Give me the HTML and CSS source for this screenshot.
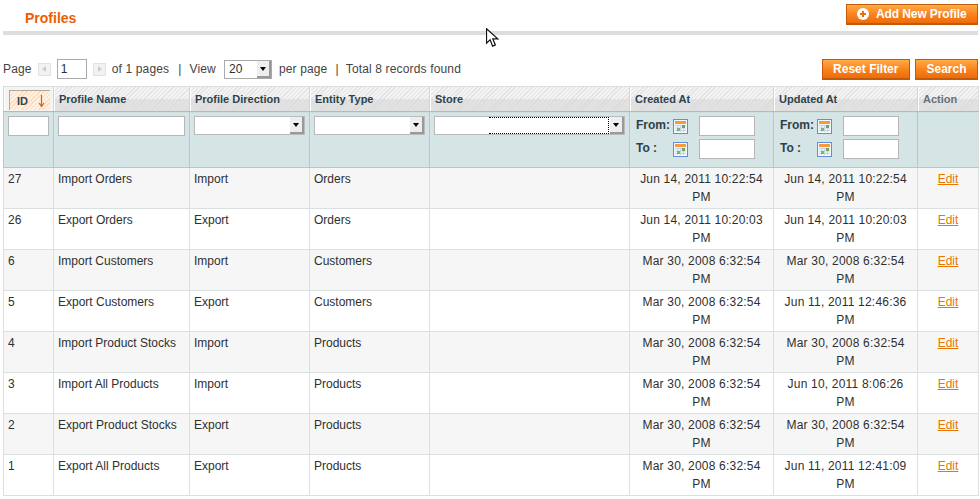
FILE: index.html
```html
<!DOCTYPE html>
<html lang="en">
<head>
  <meta charset="UTF-8">
  <title>Profiles</title>
  <link rel="stylesheet" href="styles.css">
</head>
<body>

  <svg class="defs" width="0" height="0">
    <symbol id="cal" viewBox="0 0 15 15">
      <rect x="0.5" y="0.5" width="14" height="14" fill="#f4f7fc" stroke="#5f8fd6"/>
      <rect x="2" y="2" width="11" height="3" fill="#f79a3e"/>
      <path d="M2 6.5h11M2 9h11M2 11.5h11M4.500 6v7M7.500 6v7M10.500 6v7" stroke="#c3d3e8" stroke-width="1"/>
      <rect x="9" y="6" width="3" height="3" fill="#68a95b"/>
      <rect x="4" y="9" width="3" height="3" fill="#7fb56f"/>
    </symbol>
  </svg>

  <div class="head">
    <h3>Profiles</h3>
    <button class="btn btn-add" type="button">
      <svg class="plus" width="12" height="12" viewBox="0 0 12 12">
        <circle cx="6" cy="6" r="6" fill="#fff"/>
        <path d="M6 3v6M3 6h6" stroke="#e8700c" stroke-width="2"/>
      </svg>
      Add New Profile
    </button>
  </div>

  <div class="toolbar">
    <div class="pager">
      Page
      <span class="arrow arrow-prev"></span>
      <input class="page-input" type="text" value="1">
      <span class="arrow arrow-next"></span>
      of 1 pages
      <span class="sep">|</span>
      View
      <span class="select select-view"><span class="select-val">20</span><span class="select-btn"></span></span>
      per page
      <span class="sep sep-last">|</span>
      Total 8 records found
    </div>
    <div class="actions">
      <button class="btn" type="button">Reset Filter</button>
      <button class="btn" type="button">Search</button>
    </div>
  </div>

  <table class="grid">
    <colgroup>
      <col class="c-id"><col class="c-name"><col class="c-dir"><col class="c-type">
      <col class="c-store"><col class="c-date"><col class="c-date"><col class="c-action">
    </colgroup>
    <thead>
      <tr class="headings">
        <th class="sorted">
          <span class="sort">ID
            <svg class="sort-arrow" width="7" height="12" viewBox="0 0 7 12">
              <path d="M3.500 0v11M1 8l2.500 3.500L6 8" fill="none" stroke="#eb5e00" stroke-width="1.200"/>
            </svg>
          </span>
        </th>
        <th>Profile Name</th>
        <th>Profile Direction</th>
        <th>Entity Type</th>
        <th>Store</th>
        <th>Created At</th>
        <th>Updated At</th>
        <th class="no-link">Action</th>
      </tr>
      <tr class="filter">
        <th><input class="field" type="text"></th>
        <th><input class="field" type="text"></th>
        <th><span class="select"><span class="select-btn"></span></span></th>
        <th><span class="select"><span class="select-btn"></span></span></th>
        <th><span class="select select-store"><span class="focus"></span><span class="select-btn"></span></span></th>
        <th>
          <div class="range">
            <span class="range-label">From:</span><svg class="cal" width="15" height="15"><use href="#cal"/></svg><input class="field" type="text">
            <span class="range-label">To :</span><svg class="cal" width="15" height="15"><use href="#cal"/></svg><input class="field" type="text">
          </div>
        </th>
        <th>
          <div class="range">
            <span class="range-label">From:</span><svg class="cal" width="15" height="15"><use href="#cal"/></svg><input class="field" type="text">
            <span class="range-label">To :</span><svg class="cal" width="15" height="15"><use href="#cal"/></svg><input class="field" type="text">
          </div>
        </th>
        <th></th>
      </tr>
    </thead>
    <tbody>
      <tr class="even"><td>27</td><td>Import Orders</td><td>Import</td><td>Orders</td><td></td><td class="mid date">Jun 14, 2011 10:22:54 PM</td><td class="mid date">Jun 14, 2011 10:22:54 PM</td><td class="mid"><a href="#">Edit</a></td></tr>
      <tr><td>26</td><td>Export Orders</td><td>Export</td><td>Orders</td><td></td><td class="mid date">Jun 14, 2011 10:20:03 PM</td><td class="mid date">Jun 14, 2011 10:20:03 PM</td><td class="mid"><a href="#">Edit</a></td></tr>
      <tr class="even"><td>6</td><td>Import Customers</td><td>Import</td><td>Customers</td><td></td><td class="mid date">Mar 30, 2008 6:32:54 PM</td><td class="mid date">Mar 30, 2008 6:32:54 PM</td><td class="mid"><a href="#">Edit</a></td></tr>
      <tr><td>5</td><td>Export Customers</td><td>Export</td><td>Customers</td><td></td><td class="mid date">Mar 30, 2008 6:32:54 PM</td><td class="mid date">Jun 11, 2011 12:46:36 PM</td><td class="mid"><a href="#">Edit</a></td></tr>
      <tr class="even"><td>4</td><td>Import Product Stocks</td><td>Import</td><td>Products</td><td></td><td class="mid date">Mar 30, 2008 6:32:54 PM</td><td class="mid date">Mar 30, 2008 6:32:54 PM</td><td class="mid"><a href="#">Edit</a></td></tr>
      <tr><td>3</td><td>Import All Products</td><td>Import</td><td>Products</td><td></td><td class="mid date">Mar 30, 2008 6:32:54 PM</td><td class="mid date">Jun 10, 2011 8:06:26 PM</td><td class="mid"><a href="#">Edit</a></td></tr>
      <tr class="even"><td>2</td><td>Export Product Stocks</td><td>Export</td><td>Products</td><td></td><td class="mid date">Mar 30, 2008 6:32:54 PM</td><td class="mid date">Mar 30, 2008 6:32:54 PM</td><td class="mid"><a href="#">Edit</a></td></tr>
      <tr><td>1</td><td>Export All Products</td><td>Export</td><td>Products</td><td></td><td class="mid date">Mar 30, 2008 6:32:54 PM</td><td class="mid date">Jun 11, 2011 12:41:09 PM</td><td class="mid"><a href="#">Edit</a></td></tr>
    </tbody>
  </table>

  <!-- mouse pointer caught in the screenshot -->
  <svg class="pointer" width="15" height="20" viewBox="0 0 15 20">
    <path d="M0.500 0.700v14.500l3.600-3.300 2.500 6.200 2.800-1.200-2.600-6h5z" fill="#fff" stroke="#111" stroke-width="1.200"/>
  </svg>

</body>
</html>
```

FILE: styles.css
```css
html, body {
  height: 100%;
}

body {
  margin: 0;
  padding: 4px 2px 0 3px;
  box-sizing: border-box;
  overflow: hidden;
  position: relative;
  background: #fff;
  color: #2f2f2f;
  font: 12px/18px "Liberation Sans", Arial, sans-serif;
}

.defs {
  position: absolute;
}

.head {
  display: flex;
  justify-content: space-between;
  align-items: flex-start;
  height: 27px;
  border-bottom: 4px solid #ddd;
}

h3 {
  margin: 5px 0 0 22px;
  color: #eb5e00;
  font-size: 14px;
  line-height: 18px;
  font-weight: bold;
}

.btn {
  height: 21px;
  padding: 0 10.5px;
  border: 1px solid #c25a08;
  border-width: 1px 1px 2px;
  background: linear-gradient(#ffac47, #f9841f 50%, #ee6c0a);
  color: #fff;
  font: bold 12px/16px "Liberation Sans", Arial, sans-serif;
  cursor: pointer;
}

.btn-add {
  display: flex;
  align-items: center;
  gap: 7px;
  width: 132px;
  padding: 0 0 0 10px;
  letter-spacing: -0.1px;
}

.plus {
  flex: none;
}

.toolbar {
  display: flex;
  justify-content: space-between;
  align-items: flex-start;
  height: 27px;
  margin-top: 24px;
}

.pager {
  display: flex;
  align-items: center;
  height: 20px;
  color: #444;
  letter-spacing: 0.15px;
}

.arrow {
  width: 11px;
  height: 11px;
  border: 1px solid #e2e2e2;
  background: #f2f2f2;
  position: relative;
}

.arrow-prev {
  margin: 0 6px 0 6px;
}

.arrow-next {
  margin: 0 6px 0 6px;
}

.arrow::after {
  content: "";
  position: absolute;
  left: 3px;
  top: 2px;
  border: 3px solid transparent;
  border-left: 0;
  border-right: 4px solid #ccc;
}

.arrow-next::after {
  border-right: 0;
  border-left: 4px solid #ccc;
  left: 4px;
}

.page-input {
  box-sizing: border-box;
  width: 30px;
  height: 20px;
  padding: 0 3px;
  border: 1px solid #aaa;
  color: #2f2f2f;
  font: 12px "Liberation Sans", Arial, sans-serif;
}

.sep {
  margin: 0 8px 0 9px;
}

.sep-last {
  margin: 0 7px 0 8px;
}

.select {
  display: block;
  position: relative;
  box-sizing: border-box;
  height: 19px;
  background: #fff;
  border: 1px solid #bbb;
}

.select-view {
  width: 48px;
  margin: 0 7px 0 8px;
  border-color: #aaa;
  color: #2f2f2f;
  padding-left: 4px;
  line-height: 16px;
}

.select-btn {
  position: absolute;
  right: 0;
  top: 0;
  bottom: 0;
  width: 14px;
  background: #eee;
  border-right: 2px solid #999;
  border-bottom: 2px solid #999;
  box-sizing: border-box;
}

.select-btn::after {
  content: "";
  position: absolute;
  left: 3px;
  top: 6px;
  border: 3px solid transparent;
  border-top: 4px solid #000;
  border-bottom: 0;
}

.focus {
  position: absolute;
  left: 54px;
  right: 15px;
  top: 0;
  bottom: 0;
  border: 1px dotted #000;
  border-left: 0;
}

.actions {
  display: flex;
  gap: 5px;
}

.grid {
  width: 975px;
  table-layout: fixed;
  border-collapse: collapse;
  border: 1px solid #dadfe0;
}

.c-id { width: 50px; }
.c-name { width: 136px; }
.c-dir, .c-type { width: 120px; }
.c-store { width: 200px; }
.c-date { width: 144px; }
.c-action { width: 61px; }

.headings th {
  height: 21px;
  padding: 0 5px;
  border-left: 1px solid #d4d4d4;
  border-bottom: 1px solid #b8b8b8;
  box-shadow: inset 1px 0 #fff;
  background:
    repeating-linear-gradient(135deg, #e3e3e3 0 1px, #f3f3f3 1px 3px) top / 100% 12px no-repeat,
    repeating-linear-gradient(135deg, #d9d9d9 0 1px, #e3e3e3 1px 3px);
  color: #2d444f;
  font-size: 11px;
  line-height: 14px;
  font-weight: bold;
  text-align: left;
}

.headings .sorted {
  padding: 2px 3px 1px 5px;
  background: #f4f4f4;
}

.sort {
  display: flex;
  justify-content: space-between;
  box-sizing: border-box;
  height: 20px;
  padding: 3px 5px 0 7px;
  border: 1px solid #b5a898;
  border-width: 1px 0 0 1px;
  background: repeating-linear-gradient(135deg, #fbdcbd 0 1px, #fff0e0 1px 3px);
}

.sort-arrow {
  margin-top: 1px;
}

.headings .no-link {
  color: #67727b;
}

.filter th {
  height: 56px;
  padding: 4px;
  box-sizing: border-box;
  vertical-align: top;
  border-left: 1px solid #bcc5c6;
  border-bottom: 1px solid #bcc5c6;
  background:
    repeating-linear-gradient(90deg, rgba(255, 255, 255, 0.25) 0 1px, transparent 1px 2px),
    repeating-linear-gradient(0deg, rgba(150, 185, 190, 0.25) 0 1px, transparent 1px 2px),
    #d7e5e6;
  color: #2d3f47;
  text-align: left;
}

.field {
  display: block;
  box-sizing: border-box;
  width: 100%;
  height: 20px;
  padding: 0 2px;
  border: 1px solid #b6b6b6;
  background: #fff;
}

.range {
  display: grid;
  grid-template-columns: 37px 26px 56px;
  grid-auto-rows: 20px;
  row-gap: 3px;
  padding-left: 2px;
  align-items: center;
  font-size: 12px;
}

.range-label {
  padding-bottom: 3px;
}

.cal {
  display: block;
}

td {
  padding: 2px 4px;
  border: 1px solid #dadfe0;
  vertical-align: top;
  height: 36px;
}

.even td {
  background: #f6f6f6;
}

.mid {
  text-align: center;
}

.date {
  letter-spacing: 0.2px;
}

a {
  color: #ea7601;
}

.pointer {
  position: absolute;
  left: 486px;
  top: 28px;
}
```
